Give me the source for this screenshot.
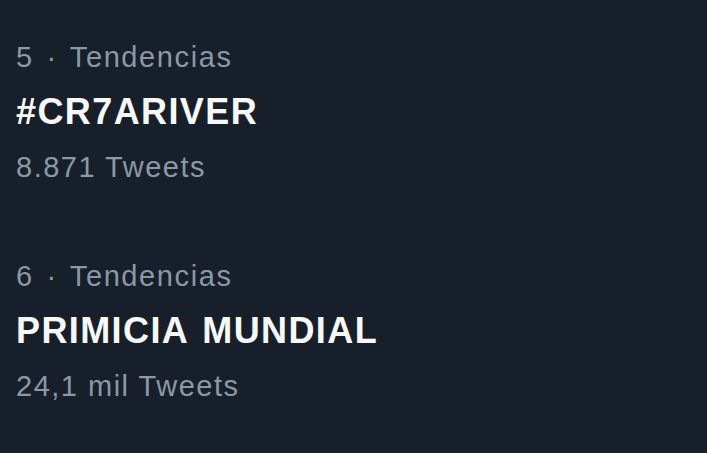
const trends = [
  { rank: 5, name: "#CR7ARIVER", count: "8.871 Tweets" },
  { rank: 6, name: "PRIMICIA MUNDIAL", count: "24,1 mil Tweets" },
];

export default function App() {
  return (
    <div className="w-[707px] h-[453px] bg-[#17202a] overflow-hidden pt-[30px] font-['Liberation_Sans',Arial,sans-serif]">
      {trends.map((t) => (
        <div key={t.rank} className="pl-[16px] h-[219px]">
          <div className="text-[29px] leading-[54px] tracking-[1.6px] text-[#8b98a5]">
            {t.rank} <span className="mx-[3px]">·</span> Tendencias
          </div>
          <div className="text-[36px] leading-[56px] tracking-[1.4px] [word-spacing:3px] font-bold text-[#f7f9f9]">
            {t.name}
          </div>
          <div className="text-[29px] leading-[54px] tracking-[1.5px] text-[#8b98a5]">
            {t.count}
          </div>
        </div>
      ))}
    </div>
  );
}
